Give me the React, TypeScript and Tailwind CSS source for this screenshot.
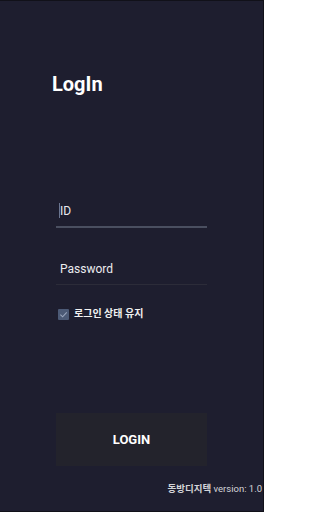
import React from "react";

export default function App() {
  const font = { fontFamily: 'Roboto, "Noto Sans CJK KR", sans-serif' };
  return (
    <div
      style={font}
      className="w-[264px] h-[512px] bg-[#1e1e2f] border-t border-r border-b border-[#111119] flex flex-col overflow-hidden"
    >
      <div className="pl-[52px] pt-[71px]">
        <h1 className="text-[20px] leading-[24px] font-bold text-white">LogIn</h1>
      </div>

      <div className="mx-auto w-[151px] mt-[107px] flex flex-col">
        <div className="relative pl-[4px] pb-[7px] border-b-2 border-[#4a4f60]">
          <span className="absolute left-[3px] top-[0px] w-px h-[15px] bg-[#6a7590]" />
          <span className="block text-[12px] leading-[16px] text-[#e8e8ee]">ID</span>
        </div>
        <div className="mt-[33px] pl-[4px] pb-[7px] border-b border-[#2c2c39]">
          <span className="block text-[12px] leading-[16px] text-[#ececf0]">Password</span>
        </div>
        <div className="mt-[22px] flex items-center gap-[5px] pl-[2px]">
          <span className="w-[11px] h-[11px] rounded-[1px] bg-[#4c5a76] flex items-center justify-center">
            <svg width="9" height="9" viewBox="0 0 10 10" fill="none">
              <path d="M1.5 5.2 L4 7.6 L8.6 2.6" stroke="#9aa6bd" strokeWidth="1.2" />
            </svg>
          </span>
          <span className="text-[10px] leading-[14px] font-bold text-[#f2f2f2]">로그인 상태 유지</span>
        </div>
        <button className="mt-[92px] h-[53px] w-full bg-[#23232c] text-white text-[13px] font-bold">
          LOGIN
        </button>
      </div>
      <div className="mt-[17px] pr-[1px] flex justify-end">
        <span className="text-[9.5px] leading-[12px] text-[#d4d4d8]">
          <span className="font-bold">동방디지텍</span> version: 1.0
        </span>
      </div>
    </div>
  );
}
